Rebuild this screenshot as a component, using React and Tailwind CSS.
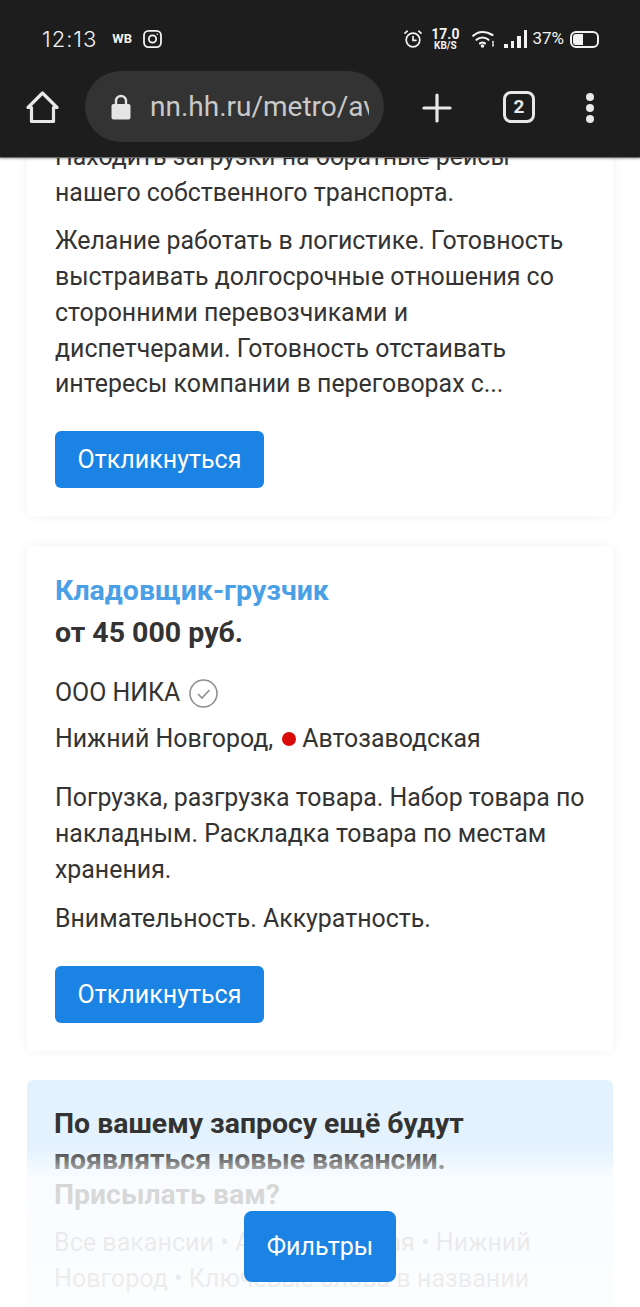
import React from "react";

const BUTTON = "inline-flex items-center justify-center bg-[#1a83e3] text-white rounded-[6px] text-[25px]";

const HomeIcon = () => (
  <svg width="33" height="33" viewBox="0 0 33 33" fill="none" stroke="#e8e8e8" strokeWidth="3.2" strokeLinejoin="round" strokeLinecap="round">
    <path d="M2 16.500 16.500 2 31 16.500h-3.500V30.500h-22V16.500z" />
  </svg>
);

const Instagram = () => (
  <svg width="19" height="18" viewBox="0 0 19 18" fill="none" stroke="#f2f2f2" strokeWidth="1.8">
    <rect x="1" y="0.900" width="17" height="16.200" rx="4.500" />
    <circle cx="9.500" cy="9" r="3.700" />
    <circle cx="14.300" cy="4.300" r="0.800" fill="#f2f2f2" stroke="none" />
  </svg>
);

const Alarm = () => (
  <svg width="18" height="18" viewBox="0 0 18 18" fill="none" stroke="#f2f2f2" strokeWidth="1.700" strokeLinecap="round">
    <circle cx="9" cy="10" r="6.800" />
    <path d="M9 6.500v3.800h3M1 3.200 3.200 1.200M17 3.200 14.800 1.200" />
  </svg>
);

const Wifi = () => (
  <svg width="23" height="18" viewBox="0 0 23 18" fill="none" stroke="#f2f2f2" strokeWidth="2.100" strokeLinecap="round">
    <path d="M1.200 5.800C6.500.8 14 .8 20.500 5M4.500 9.800c3.500-3 8.500-3 12 0M8 13.300c1.500-1 3.500-1 5 0" />
    <circle cx="10.500" cy="16" r="1.800" fill="#f2f2f2" stroke="none" />
    <path d="M21 11.500v5.500" strokeWidth="1.600" strokeDasharray="1.500 1.500" />
  </svg>
);

const Signal = () => (
  <div className="flex items-end gap-[3px] h-[18px]">
    <div className="w-[3.500px] h-[4px] bg-[#f2f2f2]" />
    <div className="w-[3.500px] h-[7px] bg-[#f2f2f2]" />
    <div className="w-[3.500px] h-[12px] bg-[#f2f2f2]" />
    <div className="w-[3.500px] h-[18px] bg-[#f2f2f2]" />
  </div>
);

const Battery = () => (
  <div className="w-[29px] h-[17px] rounded-[6px] border-2 border-[#f2f2f2] p-[1px] flex">
    <div className="w-[10px] h-full rounded-l-[3px] bg-[#f2f2f2]" />
  </div>
);

const StatusBar = () => (
  <div className="h-[71px] pl-[42px] pr-[41px] pt-[27px] flex justify-between items-start text-[#f2f2f2]">
    <div className="flex items-center h-[24px]">
      <span className="text-[22px] tracking-[1px] font-['Inter',sans-serif] font-light">12:13</span>
      <span className="ml-[15px] text-[13px] font-bold">WB</span>
      <span className="ml-[11px] flex"><Instagram /></span>
    </div>
    <div className="flex items-center h-[24px]">
      <Alarm />
      <div className="ml-[9px] flex flex-col items-center font-bold">
        <span className="text-[14px] leading-[13px]">17.0</span>
        <span className="text-[10px] leading-[9px]">KB/S</span>
      </div>
      <span className="ml-[13px] flex"><Wifi /></span>
      <span className="ml-[9px]"><Signal /></span>
      <span className="ml-[5px] text-[17px]">37%</span>
      <span className="ml-[6px] flex"><Battery /></span>
    </div>
  </div>
);

const BrowserBar = () => (
  <div className="h-[86px] flex items-start pl-[26px]">
    <div className="mt-[20px] flex"><HomeIcon /></div>
    <div className="ml-[26px] w-[299px] h-[71px] rounded-full bg-[#333333] flex items-center pl-[26px] overflow-hidden">
      <svg width="20" height="26" viewBox="0 0 20 26" className="shrink-0" fill="#e4e4e4">
        <path d="M5 11V7a5 5 0 0 1 10 0v4" fill="none" stroke="#e4e4e4" strokeWidth="2.400" />
        <rect x="0.500" y="10" width="19" height="15.500" rx="2" />
      </svg>
      <span className="ml-[19px] w-[219px] overflow-hidden text-[28px] text-[#c9c9c9] whitespace-nowrap">nn.hh.ru/metro/av</span>
    </div>
    <svg className="ml-[38px] mt-[22px]" width="30" height="30" viewBox="0 0 30 30" stroke="#e8e8e8" strokeWidth="3.200" strokeLinecap="round">
      <path d="M15 2v26M2 15h26" />
    </svg>
    <div className="ml-[51px] mt-[20px] w-[32px] h-[32px] rounded-[8px] border-[3px] border-[#e8e8e8] flex items-center justify-center text-[#e8e8e8] text-[19px] font-bold">2</div>
    <div className="ml-[51px] mt-[22px] flex flex-col gap-[3px]">
      <div className="w-[8px] h-[8px] rounded-full bg-[#e8e8e8]" />
      <div className="w-[8px] h-[8px] rounded-full bg-[#e8e8e8]" />
      <div className="w-[8px] h-[8px] rounded-full bg-[#e8e8e8]" />
    </div>
  </div>
);

const Card = ({ className, children }) => (
  <div className={"mx-[27px] bg-white rounded-[6px] shadow-[0_0_12px_rgba(0,0,0,0.06)] " + className}>{children}</div>
);

const Respond = ({ className }) => (
  <button className={BUTTON + " w-[209px] h-[57px] " + className}>Откликнуться</button>
);

export default function App() {
  return (
    <div className="relative w-[640px] h-[1307px] overflow-hidden bg-white font-['Roboto',sans-serif] text-[#333333]">
      {/* Browser chrome */}
      <div className="relative z-10 h-[158px] bg-[#1d1d1d] border-b border-[#6b6b6b] shadow-[0_1px_2px_rgba(0,0,0,0.3)]">
        <StatusBar />
        <BrowserBar />
      </div>

      <div className="h-[1149px] overflow-hidden">
        {/* Cut off card */}
        <Card className="-mt-[19px] h-[377px] px-[28px] pt-0">
          <div className="text-[24.900px] leading-[35.700px]">
            <p>Находить загрузки на обратные рейсы<br />нашего собственного транспорта.</p>
            <p className="mt-[13px]">
              Желание работать в логистике. Готовность<br />
              выстраивать долгосрочные отношения со<br />
              сторонними перевозчиками и<br />
              диспетчерами. Готовность отстаивать<br />
              интересы компании в переговорах с...
            </p>
          </div>
          <Respond className="mt-[29px]" />
        </Card>

        {/* Vacancy */}
        <Card className="mt-[30px] h-[505px] px-[28px] pt-[27px]">
          <h2 className="text-[28.500px] leading-[36px] font-bold text-[#4a9fe6]">Кладовщик-грузчик</h2>
          <div className="mt-[6px] text-[28.500px] leading-[36px] font-bold">от 45 000 руб.</div>
          <div className="mt-[24px] flex items-center text-[24.900px] leading-[36px]">
            ООО НИКА
            <svg className="ml-[9px]" width="29" height="29" viewBox="0 0 29 29" fill="none" stroke="#8f8f8f" strokeWidth="1.600">
              <circle cx="14.500" cy="14.500" r="13.500" />
              <path d="m9 15 4 4 7.500-8" />
            </svg>
          </div>
          <div className="mt-[10px] flex items-center text-[24.900px] leading-[36px]">
            Нижний Новгород,
            <span className="ml-[9px] w-[14px] h-[14px] rounded-full bg-[#d90a0a]" />
            <span className="ml-[6px]">Автозаводская</span>
          </div>
          <p className="mt-[23px] text-[24.900px] leading-[36px]">
            Погрузка, разгрузка товара. Набор товара по<br />
            накладным. Раскладка товара по местам<br />
            хранения.
          </p>
          <p className="mt-[13px] text-[24.900px] leading-[36px]">Внимательность. Аккуратность.</p>
          <Respond className="mt-[29px]" />
        </Card>

        {/* Subscribe */}
        <div className="mt-[29px] mx-[27px] h-[300px] rounded-[6px] bg-[#e4f2fe] px-[27px] pt-[26px]">
          <h3 className="text-[28.400px] leading-[35.700px] font-bold">
            По вашему запросу ещё будут<br />
            появляться новые вакансии.<br />
            Присылать вам?
          </h3>
          <p className="mt-[12px] text-[25.100px] leading-[36px] text-[#8a8a8a]">
            Все вакансии • Автозаводская • Нижний<br />
            Новгород • Ключевые слова в названии
          </p>
        </div>
      </div>

      {/* Fade over the end of the list */}
      <div className="absolute left-0 right-0 bottom-0 h-[160px] bg-gradient-to-b from-white/0 via-white/80 via-20% to-white/85" />

      <button className={BUTTON + " absolute left-[244px] top-[1211px] w-[152px] h-[71px] rounded-[8px]"}>Фильтры</button>
    </div>
  );
}
